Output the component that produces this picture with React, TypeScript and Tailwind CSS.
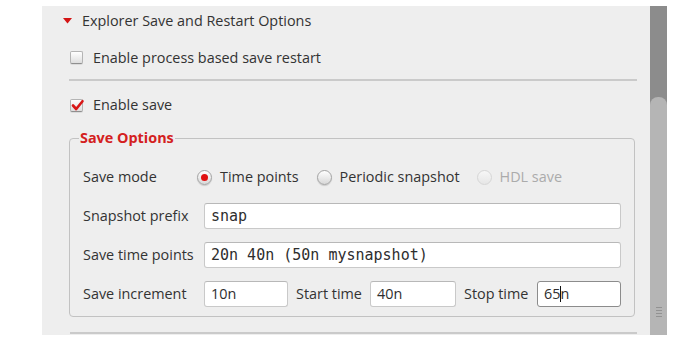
import React from "react";

const font = { fontFamily: '"Open Sans", "Noto Sans", sans-serif' };
const mono = { fontFamily: '"DejaVu Sans Mono", "Liberation Mono", monospace' };

function Checkbox({ checked }: { checked?: boolean }) {
  return (
    <div className="relative w-[13px] h-[13px] rounded-[2px] border border-[#b4b4b4] border-b-[#8f8f8f] bg-gradient-to-b from-white to-[#dedede] shadow-[0_1px_0_rgba(0,0,0,0.08)]">
      {checked && (
        <svg className="absolute -left-[1px] -top-[2px]" width="15" height="15" viewBox="0 0 15 15">
          <path d="M3 7.5 L6.2 11 L12.5 3.2" fill="none" stroke="#d81818" strokeWidth="2.6" strokeLinecap="round" strokeLinejoin="round" />
        </svg>
      )}
    </div>
  );
}

function Radio({ checked, disabled }: { checked?: boolean; disabled?: boolean }) {
  return (
    <div
      className={
        "w-[15px] h-[15px] rounded-full border flex items-center justify-center bg-gradient-to-b " +
        (disabled
          ? "border-[#d6d6d6] from-[#f7f7f7] to-[#e6e6e6]"
          : "border-[#a3a3a3] from-white to-[#d8d8d8] shadow-[0_1px_1px_rgba(0,0,0,0.15)]")
      }
    >
      {checked && <div className="w-[7px] h-[7px] rounded-full bg-[#e01010]" />}
    </div>
  );
}

function Field({ value, className, monoText, focused }: { value: React.ReactNode; className?: string; monoText?: boolean; focused?: boolean }) {
  return (
    <div
      className={
        "h-[26px] bg-white border rounded-[3px] pl-[6px] flex items-center text-[#2e2e2e] " +
        (focused ? "border-[#8c8c8c] " : "border-[#c9c9c9] border-t-[#b8b8b8] ") +
        (monoText ? "text-[15px] " : "text-[14.4px] ") +
        (className || "")
      }
      style={monoText ? mono : undefined}
    >
      {value}
    </div>
  );
}

export default function App() {
  return (
    <div className="w-[699px] h-[340px] bg-white overflow-hidden text-[14.4px] text-[#333333]" style={font}>
      <div className="ml-[42px] mt-[6px] flex h-[329px]">
        <div className="w-[608px] bg-[#eeeeee] flex flex-col">
          {/* section header */}
          <div className="h-[30px] flex items-center pl-[21px]">
            <svg width="9" height="6" viewBox="0 0 9 6">
              <path d="M0 0 L9 0 L4.5 5.5 Z" fill="#d41414" />
            </svg>
            <span className="ml-[10px]">Explorer Save and Restart Options</span>
          </div>

          <div className="h-[43px] flex items-center pl-[28px]">
            <Checkbox />
            <span className="ml-[10px]">Enable process based save restart</span>
          </div>

          <div className="h-[2px] bg-[#cacaca] ml-[27px] mr-[13px]" />

          <div className="h-[48px] flex items-center pl-[28px]">
            <Checkbox checked />
            <span className="ml-[10px]">Enable save</span>
          </div>

          {/* group box */}
          <div className="relative mt-[9px] ml-[27px] mr-[15px] h-[179px] border border-[#c2c2c2] rounded-[4px] pt-[25px] px-[13px] flex flex-col gap-[13px]">
            <div className="absolute left-[9px] -top-[11px] px-[1px] bg-[#eeeeee] font-bold text-[#d42020] leading-[20px]">
              Save Options
            </div>

            <div className="h-[26px] flex items-center">
              <span className="w-[114px]">Save mode</span>
              <Radio checked />
              <span className="ml-[8px]">Time points</span>
              <div className="ml-[18px]"><Radio /></div>
              <span className="ml-[8px]">Periodic snapshot</span>
              <div className="ml-[17px]"><Radio disabled /></div>
              <span className="ml-[8px] text-[#ababab]">HDL save</span>
            </div>

            <div className="h-[26px] flex items-center">
              <span className="w-[121px]">Snapshot prefix</span>
              <Field value="snap" monoText className="flex-1" />
            </div>

            <div className="h-[26px] flex items-center">
              <span className="w-[121px]">Save time points</span>
              <Field value="20n 40n (50n mysnapshot)" monoText className="flex-1" />
            </div>

            <div className="h-[26px] flex items-center">
              <span className="w-[121px]">Save increment</span>
              <Field value="10n" className="w-[84px]" />
              <span className="ml-[8px] w-[74px]">Start time</span>
              <Field value="40n" className="w-[86px]" />
              <span className="ml-[8px] w-[73px]">Stop time</span>
              <Field
                focused
                className="flex-1"
                value={
                  <>
                    65<span className="inline-block w-[1px] h-[16px] bg-[#111] -mr-[1px]" />n
                  </>
                }
              />
            </div>
          </div>

          <div className="mt-[15px] h-[2px] bg-[#cacaca] ml-[28px] mr-[13px]" />
        </div>

        {/* scrollbar */}
        <div className="w-[17px] bg-[#8c8c8c] flex flex-col pt-[91px]">
          <div className="flex-1 bg-[#b5b5b5] rounded-t-[8px] flex flex-col justify-end items-center pb-[18px] gap-[2px]">
            <div className="w-[6px] h-[1px] bg-[#929292]" />
            <div className="w-[6px] h-[1px] bg-[#929292]" />
            <div className="w-[6px] h-[1px] bg-[#929292]" />
            <div className="w-[6px] h-[1px] bg-[#929292]" />
          </div>
        </div>
      </div>
    </div>
  );
}
